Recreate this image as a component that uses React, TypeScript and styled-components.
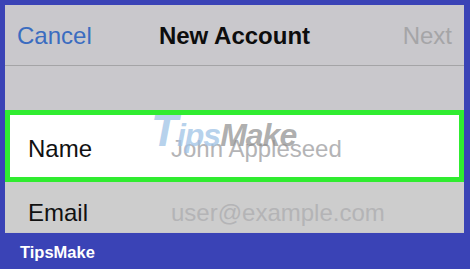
import React from "react";
import styled, { createGlobalStyle } from "styled-components";

const Global = createGlobalStyle`
  html, body { margin: 0; padding: 0; }
  body { background: #3a43b6; font-family: "Liberation Sans", Arial, sans-serif; }
`;

const Page = styled.div`
  position: relative;
  width: 470px;
  height: 269px;
  background: #3a43b6;
  display: flex;
  flex-direction: column;
  padding: 5px 6px 0 5px;
  box-sizing: border-box;
  overflow: hidden;
`;

const Screen = styled.div`
  height: 228px;
  display: flex;
  flex-direction: column;
  background: #c9c8cc;
  overflow: hidden;
`;

const NavBar = styled.div`
  height: 61px;
  display: grid;
  grid-template-columns: 1fr auto 1fr;
  align-items: center;
  padding: 1px 12px 0 12px;
  box-sizing: border-box;
  border-bottom: 1px solid #a4a4a6;
  font-size: 24px;
`;

const NavButton = styled.span<{ $muted?: boolean; $right?: boolean }>`
  color: ${(p) => (p.$muted ? "#a5a5a7" : "#3a6cc0")};
  justify-self: ${(p) => (p.$right ? "end" : "start")};
`;

const Title = styled.span`
  font-weight: bold;
  color: #0d0d0d;
`;

const Spacer = styled.div`
  height: 44px;
`;

const Row = styled.div<{ $highlight?: boolean }>`
  display: flex;
  align-items: center;
  box-sizing: border-box;
  font-size: 24px;
  height: ${(p) => (p.$highlight ? "72px" : "50px")};
  background: ${(p) => (p.$highlight ? "#ffffff" : "#cdcdcd")};
  border: ${(p) => (p.$highlight ? "5px solid #30ec30" : "none")};
  padding: ${(p) => (p.$highlight ? "5px 0 0 18px" : "11px 0 0 23px")};
`;

const Label = styled.span`
  width: 143px;
  color: #111;
`;

const Placeholder = styled.span`
  color: #b4b4b6;
`;

const Footer = styled.div`
  flex: 1;
  display: flex;
  align-items: center;
  padding: 3px 0 0 15px;
  color: #ffffff;
  font-weight: bold;
  font-size: 16.5px;
`;

const Watermark = styled.div`
  position: absolute;
  left: 151px;
  top: 106px;
  font-weight: bold;
  font-style: italic;
  font-size: 32px;
  letter-spacing: -1px;
  pointer-events: none;
  white-space: nowrap;
`;

const WmTips = styled.span`
  color: rgba(160, 195, 230, 0.75);
`;

const WmBig = styled.span`
  font-size: 44px;
`;

const WmMake = styled.span`
  color: rgba(140, 140, 140, 0.7);
`;

export default function App() {
  return (
    <>
      <Global />
      <Page>
        <Screen>
          <NavBar>
            <NavButton>Cancel</NavButton>
            <Title>New Account</Title>
            <NavButton $muted $right>Next</NavButton>
          </NavBar>
          <Spacer />
          <Row $highlight>
            <Label>Name</Label>
            <Placeholder>John Appleseed</Placeholder>
          </Row>
          <Row>
            <Label>Email</Label>
            <Placeholder>user@example.com</Placeholder>
          </Row>
        </Screen>
        <Footer>TipsMake</Footer>
        <Watermark>
          <WmTips><WmBig>T</WmBig>ips</WmTips>
          <WmMake>Make</WmMake>
        </Watermark>
      </Page>
    </>
  );
}
